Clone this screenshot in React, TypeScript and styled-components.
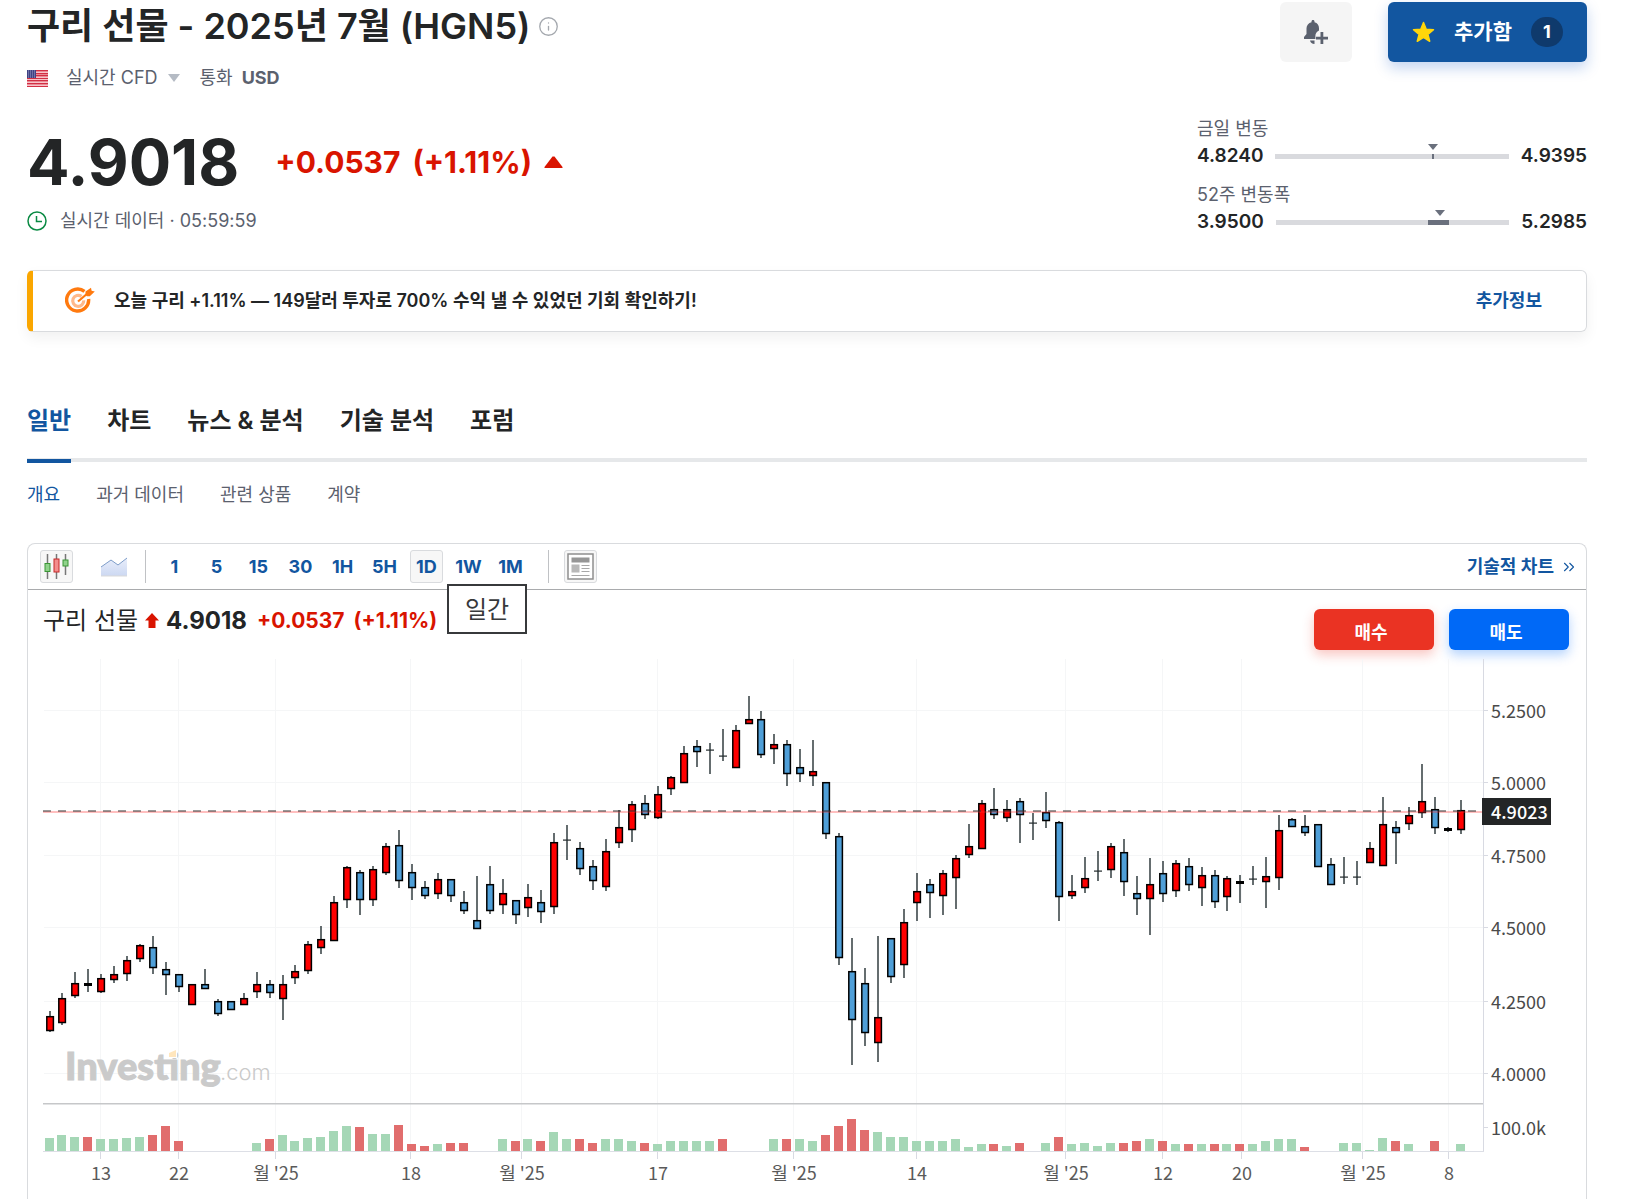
import React from "react";
import styled, { createGlobalStyle } from "styled-components";
import { ChevronsRight, Info } from "lucide-react";

const sans = `Inter, "Noto Sans CJK KR", sans-serif`;
const korean = `"Noto Sans CJK KR", sans-serif`;
const color = {
  ink: "#232526",
  muted: "#5b616e",
  blue: "#1256a0",
  red: "#d91400",
  line: "#d9dbde",
};

const GlobalStyle = createGlobalStyle`
  *, *::before, *::after { box-sizing: border-box; }
  body { margin: 0; background: #fff; color: ${color.ink}; font-family: ${sans}; }
  h1, p, dl, dd, dt { margin: 0; }
  button { font: inherit; color: inherit; border: 0; padding: 0; background: none; cursor: pointer; }
  a { text-decoration: none; color: inherit; }
`;

const Page = styled.main`
  padding: 0 43px 0 27px;
`;

/* ---------- header ---------- */

const Header = styled.header`
  display: flex;
  justify-content: space-between;
`;

const Summary = styled.div`
  padding-top: 4px;
`;

const TitleRow = styled.div`
  display: flex;
  align-items: center;
  gap: 8px;
  height: 44px;
  color: #a4a8ae;
`;

const Title = styled.h1`
  font-size: 36px;
  line-height: 44px;
  font-weight: 600;
  color: ${color.ink};
`;

const MetaRow = styled.div<{ $top: number }>`
  display: flex;
  align-items: center;
  margin-top: ${(p) => p.$top}px;
  height: 24px;
  font-size: 18px;
  line-height: 24px;
  color: ${color.muted};
`;

const Market = styled.button`
  display: flex;
  align-items: center;
  gap: 10px;
  margin: 0 20px 0 18px;
`;

const Currency = styled.strong`
  margin-left: 9px;
  font-weight: 700;
`;

const PriceRow = styled.div`
  display: flex;
  align-items: center;
  margin-top: 40px;
  height: 64px;
`;

const Price = styled.div`
  font-size: 63px;
  line-height: 64px;
  font-weight: 700;
`;

const Change = styled.div`
  display: flex;
  align-items: center;
  gap: 12px;
  margin-left: 36px;
  font-size: 30px;
  line-height: 36px;
  font-weight: 700;
  color: ${color.red};
`;

const Status = styled.span`
  margin-left: 13px;
`;

const Side = styled.div`
  width: 390px;
  padding-top: 2px;
`;

const Actions = styled.div`
  display: flex;
  justify-content: flex-end;
  gap: 36px;
  height: 60px;
`;

const AlertButton = styled.button`
  display: grid;
  place-items: center;
  width: 72px;
  border-radius: 6px;
  background: #f5f5f5;
`;

const WatchButton = styled.button`
  display: flex;
  align-items: center;
  justify-content: center;
  gap: 19px;
  width: 199px;
  border-radius: 6px;
  background: ${color.blue};
  box-shadow: 0 6px 14px rgba(18, 86, 200, 0.25);
  color: #fff;
  font-size: 21px;
  font-weight: 700;
`;

const WatchLabel = styled.span`
  padding-bottom: 5px;
`;

const Count = styled.span`
  width: 32px;
  height: 30px;
  border-radius: 15px;
  background: #0f3a6c;
  font-size: 18px;
  line-height: 30px;
  text-align: center;
`;

const Ranges = styled.dl`
  display: flex;
  flex-direction: column;
  gap: 15px;
  margin-top: 55px;
  font-size: 18px;
  line-height: 24px;
`;

const RangeLabel = styled.dt`
  color: ${color.muted};
`;

const RangeRow = styled.dd`
  display: flex;
  align-items: center;
  justify-content: space-between;
  gap: 12px;
  margin-top: 3px;
  font-size: 19px;
  font-weight: 600;
`;

const Track = styled.div`
  position: relative;
  flex: 1;
  height: 5px;
  background: #d9dade;
`;

const Span = styled.span`
  position: absolute;
  top: 0;
  height: 5px;
  background: #6a707d;
`;

const Pointer = styled.span`
  position: absolute;
  top: -10px;
  margin-left: -4px;
  border: 5px solid transparent;
  border-top: 6px solid #6a707d;
  border-bottom: 0;
`;

/* ---------- promo ---------- */

const Promo = styled.section`
  display: flex;
  align-items: center;
  gap: 19px;
  margin-top: 36px;
  height: 62px;
  padding: 0 44px 0 32px;
  border: 1px solid ${color.line};
  border-left: 6px solid #faa600;
  border-radius: 6px;
  box-shadow: 0 6px 14px rgba(0, 0, 0, 0.06);
  font-size: 18px;
  line-height: 24px;
  font-weight: 600;
`;

const PromoLink = styled.a`
  margin-left: auto;
  color: ${color.blue};
`;

/* ---------- navigation ---------- */

const Tabs = styled.nav`
  display: flex;
  gap: 36px;
  margin-top: 70px;
  height: 60px;
  border-bottom: 4px solid #e6e8ea;
  font-size: 24px;
  line-height: 38px;
  font-weight: 600;
`;

const Tab = styled.a<{ $active?: boolean }>`
  height: 61px;
  color: ${(p) => (p.$active ? color.blue : color.ink)};
  border-bottom: 4px solid ${(p) => (p.$active ? color.blue : "transparent")};
`;

const SubTabs = styled.nav`
  display: flex;
  gap: 36px;
  margin-top: 21px;
  font-size: 18px;
  line-height: 24px;
  color: ${color.muted};
`;

const SubTab = styled.a<{ $active?: boolean }>`
  color: ${(p) => (p.$active ? color.blue : "inherit")};
`;

/* ---------- chart card ---------- */

const Card = styled.section`
  margin-top: 36px;
  border: 1px solid ${color.line};
  border-bottom: 0;
  border-radius: 8px 8px 0 0;
`;

const Toolbar = styled.div`
  display: flex;
  align-items: center;
  height: 46px;
  padding: 0 8px 0 12px;
  border-bottom: 1px solid #a9abad;
`;

const Tool = styled.button<{ $boxed?: boolean }>`
  display: grid;
  place-items: center;
  width: 33px;
  height: 33px;
  border: 1px solid ${(p) => (p.$boxed ? "#d9dbde" : "transparent")};
  border-radius: 3px;
  background: ${(p) => (p.$boxed ? "#f7f7f7" : "transparent")};
`;

const ToolGroup = styled.div`
  display: flex;
  gap: 24px;
`;

const Divider = styled.span`
  width: 1px;
  height: 33px;
  margin: 0 15px;
  background: #c0c2c5;
`;

const Frames = styled.div`
  display: flex;
  gap: 9px;
  margin-right: 6px;
  margin-left: -3px;
  font-size: 18px;
  font-weight: 700;
  color: ${color.blue};
`;

const FrameSlot = styled.div`
  position: relative;
`;

const Tooltip = styled.div`
  position: absolute;
  top: 34px;
  left: 37px;
  z-index: 1;
  width: 80px;
  height: 50px;
  border: 2px solid #37393b;
  background: #fff;
  color: #37393b;
  font-size: 24px;
  line-height: 48px;
  font-weight: 400;
  text-align: center;
`;

const TechLink = styled.a`
  display: flex;
  align-items: center;
  gap: 6px;
  margin-left: auto;
  color: ${color.blue};
  font-size: 18px;
  line-height: 24px;
  font-weight: 600;
`;

const Quote = styled.div`
  display: flex;
  align-items: center;
  height: 69px;
  padding: 0 17px 8px 15px;
  font-size: 24px;
  line-height: 36px;
`;

const QuotePrice = styled.strong`
  margin: 0 10px 0 7px;
  font-weight: 700;
`;

const QuoteChange = styled.span`
  display: flex;
  gap: 9px;
  color: ${color.red};
  font-size: 21px;
  font-weight: 700;
`;

const QuoteName = styled.span`
  margin-right: 7px;
`;

const Trade = styled.div`
  display: flex;
  gap: 15px;
  height: 41px;
  margin: 17px 0 0 auto;
`;

const TradeButton = styled.button<{ $tone: string; $glow: string }>`
  width: 120px;
  height: 41px;
  padding: 6px 6px 0 0;
  border-radius: 6px;
  background: ${(p) => p.$tone};
  box-shadow: 0 5px 12px ${(p) => p.$glow};
  color: #fff;
  font-size: 18px;
  font-weight: 700;
`;

const ChartSvg = styled.svg`
  display: block;
  width: 100%;
  height: auto;
  font-family: ${korean};
  font-size: 18px;
`;

/* ---------- chart data ---------- */

type Candle = [number, number, number, number, string];

/* high, body top, body bottom, low, kind: R up, B down, K thin body, D doji */
const candles: Candle[] = [
  [352, 357, 372, 373, "R"], [334, 339, 364, 366, "R"], [313, 324, 337, 339, "R"], [310, 324, 327, 333, "K"],
  [315, 319, 333, 334, "R"], [307, 315, 321, 324, "R"], [297, 301, 315, 322, "R"], [285, 286, 300, 303, "R"],
  [277, 288, 309, 315, "B"], [303, 310, 316, 336, "B"], [315, 315, 328, 333, "B"], [325, 325, 346, 346, "R"],
  [310, 325, 330, 330, "B"], [340, 342, 355, 357, "B"], [342, 342, 351, 351, "B"], [334, 339, 346, 346, "R"],
  [313, 325, 333, 339, "R"], [321, 325, 334, 339, "B"], [316, 325, 340, 361, "R"], [306, 312, 319, 325, "R"],
  [282, 285, 312, 315, "R"], [267, 280, 289, 295, "R"], [237, 243, 282, 282, "R"], [207, 208, 241, 249, "R"],
  [211, 213, 241, 256, "B"], [207, 210, 241, 247, "R"], [184, 187, 214, 216, "R"], [171, 186, 222, 229, "B"],
  [205, 213, 229, 241, "B"], [222, 228, 237, 240, "B"], [214, 220, 235, 240, "R"], [220, 220, 237, 243, "B"],
  [232, 243, 252, 255, "B"], [217, 261, 270, 270, "B"], [207, 225, 252, 255, "B"], [220, 234, 246, 255, "R"],
  [241, 241, 256, 265, "B"], [225, 238, 249, 258, "R"], [231, 243, 253, 264, "B"], [174, 183, 248, 255, "R"],
  [166, 181, 181, 201, "D"], [183, 189, 210, 216, "B"], [201, 207, 222, 231, "B"], [180, 192, 228, 232, "R"],
  [151, 168, 184, 189, "R"], [142, 145, 171, 183, "R"], [136, 144, 156, 160, "B"], [127, 135, 159, 160, "R"],
  [117, 118, 130, 136, "R"], [87, 94, 124, 124, "R"], [81, 87, 93, 108, "B"], [84, 91, 91, 115, "D"],
  [70, 97, 97, 102, "D"], [66, 71, 109, 109, "R"], [37, 60, 65, 65, "R"], [52, 60, 96, 99, "B"],
  [75, 85, 90, 105, "R"], [81, 85, 115, 127, "B"], [90, 108, 115, 123, "B"], [81, 112, 117, 127, "R"],
  [123, 123, 175, 180, "B"], [174, 177, 299, 306, "B"], [279, 312, 361, 406, "B"], [309, 324, 374, 387, "B"],
  [277, 358, 384, 403, "R"], [279, 279, 318, 324, "B"], [250, 263, 306, 319, "R"], [214, 232, 244, 262, "R"],
  [220, 225, 234, 259, "B"], [211, 214, 237, 256, "R"], [196, 199, 219, 250, "R"], [165, 187, 196, 199, "R"],
  [141, 144, 190, 190, "R"], [129, 150, 156, 160, "B"], [141, 150, 159, 163, "R"], [139, 142, 156, 184, "B"],
  [154, 164, 164, 181, "D"], [133, 153, 162, 169, "B"], [162, 163, 238, 262, "B"], [216, 232, 237, 240, "R"],
  [198, 219, 229, 234, "R"], [192, 212, 212, 222, "D"], [184, 187, 211, 219, "R"], [180, 193, 223, 237, "B"],
  [217, 234, 240, 256, "B"], [199, 225, 240, 276, "R"], [202, 214, 235, 243, "B"], [201, 204, 232, 238, "R"],
  [199, 207, 226, 232, "B"], [208, 216, 229, 247, "R"], [211, 216, 243, 249, "B"], [217, 219, 238, 252, "R"],
  [216, 222, 225, 244, "K"], [207, 220, 220, 226, "D"], [198, 217, 223, 249, "R"], [156, 171, 219, 231, "R"],
  [159, 160, 168, 168, "B"], [156, 167, 174, 177, "B"], [165, 165, 208, 208, "B"], [199, 205, 226, 226, "B"],
  [198, 218, 218, 225, "D"], [202, 218, 218, 226, "D"], [183, 189, 204, 204, "R"], [138, 165, 207, 207, "R"],
  [162, 168, 174, 205, "B"], [148, 156, 165, 171, "R"], [105, 142, 154, 159, "R"], [138, 150, 169, 175, "B"],
  [168, 169, 172, 173, "K"], [141, 151, 171, 175, "R"],
];

/* one entry per session: bar height, negative for a falling day, 0 for none */
const volumes = [
  13, 16, 14, -14, 12, 12, 13, 14, -16, -25, -10, 0, 0, 0, 0, 0, 8, -12, 16, 10, 13, 14, 20, 25, -24, 17, 17, -26, -7, -5,
  7, -8, -8, 0, 0, 12, -10, 12, -10, 19, 12, -12, -8, 12, 12, 10, -8, 7, 10, 10, 10, 10, -12, 0, 0, 0, 12, -12, 12, 10,
  -16, -25, -32, -21, 19, 14, 14, 10, 10, 10, 12, 4, 7, -7, 5, -8, 0, 8, -14, 7, 8, 5, 8, -8, -10, 12, -10, 7, -7, 7,
  -7, 7, -7, 7, 10, 12, 12, -4, 0, 0, 8, 8, 1, 13, -10, 7, 0, -10, 0, 7,
];

const prices: [string, number][] = [
  ["5.2500", 52], ["5.0000", 124], ["4.7500", 197], ["4.5000", 269], ["4.2500", 343], ["4.0000", 415],
];

const dates: [string, number][] = [
  ["13", 73], ["22", 151], ["월 '25", 248], ["18", 383], ["월 '25", 494], ["17", 630], ["월 '25", 766],
  ["14", 889], ["월 '25", 1038], ["12", 1135], ["20", 1214], ["월 '25", 1335], ["8", 1421],
];

const timeframes = ["1", "5", "15", "30", "1H", "5H", "1D", "1W", "1M"];

const AXIS = 1455;
const BASE = 492;
const sessionX = (i: number) => Math.round(21.5 + i * 12.945);

function CandleMark({ x, candle }: { x: number; candle: Candle }) {
  const [high, top, bottom, low, kind] = candle;
  const wick = <rect x={x - 1} y={high} width={2} height={low - high} fill="#3f494b" opacity={0.8} />;
  if (kind === "D") {
    return <g>{wick}<rect x={x - 4} y={top - 0.5} width={8} height={1.2} fill="#232b2d" /></g>;
  }
  if (kind === "K") {
    return <g>{wick}<rect x={x - 4} y={top} width={8} height={bottom - top} fill="#000" /></g>;
  }
  return (
    <g>
      {wick}
      <rect x={x - 3.2} y={top + 0.7} width={6.6} height={bottom - top - 1.2} fill={kind === "R" ? "#ff0000" : "#4f9fd8"} stroke="#000" strokeWidth={1.5} />
    </g>
  );
}

function Chart() {
  return (
    <ChartSvg viewBox="0 0 1558 540" role="img" aria-label="구리 선물">
      {prices.map(([label, y]) => (
        <g key={label}>
          <rect x={16} y={y - 1} width={AXIS - 16} height={1} fill="#f5f6f7" />
          <rect x={AXIS} y={y - 1} width={5} height={1} fill="#d8dae2" />
          <text x={1463} y={y + 7} fill="#4a4a4a">{label}</text>
        </g>
      ))}
      {dates.map(([label, x]) => (
        <g key={x}>
          <rect x={x - 1} y={0} width={1} height={BASE} fill="#f5f6f7" />
          <rect x={x - 1} y={BASE} width={1} height={8} fill="#d8dae2" />
          <text x={x} y={521} textAnchor="middle" fill="#5a5a5a">{label}</text>
        </g>
      ))}

      <g fill="#cacaca">
        <text x={37} y={421} fontFamily="Lato, sans-serif" fontSize={38} fontWeight={900} stroke="#cacaca" strokeWidth={1}>Investing</text>
        <text x={192} y={421} fontFamily="Inter, sans-serif" fontSize={22} fontWeight={300}>.com</text>
        <rect x={139} y={390} width={10} height={9} fill="#fff" />
        <path d="m141 394 7-3v7h-7Z" fill="#ffe6bd" />
      </g>

      {candles.map((candle, i) => <CandleMark key={i} x={sessionX(i)} candle={candle} />)}

      <rect x={15} y={152} width={AXIS - 15} height={2} fill="#ff2a2a" opacity={0.3} />
      <line x1={15} x2={AXIS} y1={152} y2={152} stroke="#333" strokeWidth={1.2} strokeDasharray="8 7" />

      {volumes.map((v, i) =>
        v === 0 ? null : (
          <rect key={i} x={sessionX(i) - 5} y={BASE - Math.abs(v)} width={9} height={Math.abs(v)} fill={v > 0 ? "#a5d7b6" : "#e16d6d"} />
        )
      )}

      <rect x={15} y={444} width={AXIS - 15} height={1.5} fill="#c6c7c9" />
      <rect x={15} y={BASE} width={AXIS - 14} height={1} fill="#dddfe6" />
      <rect x={AXIS} y={0} width={1} height={BASE} fill="#d8dae2" />
      <rect x={AXIS} y={468} width={5} height={1} fill="#d8dae2" />
      <text x={1463} y={476} fill="#4a4a4a">100.0k</text>
      <rect x={1454} y={139} width={69} height={27} fill="#232526" />
      <text x={1463} y={160} fill="#fff" fontWeight={500}>4.9023</text>
    </ChartSvg>
  );
}

/* ---------- icons ---------- */

function Flag() {
  return (
    <svg width="21" height="17" viewBox="0 0 21 17" aria-label="US">
      <rect width="21" height="17" fill="#f7c3c9" />
      {[0, 3, 5, 8, 10, 13, 16].map((y) => <rect key={y} y={y} width="21" height="1" fill="#d22f44" />)}
      {[1, 4, 6, 11, 14].map((y) => <rect key={y} y={y} width="21" height="1" fill="#e98a95" />)}
      <rect width="9" height="8" fill="#3f4283" />
      {[1, 3, 5, 7].map((y) => <path key={y} d={`M1 ${y}h7`} stroke="#b9bbdc" strokeWidth="0.8" strokeDasharray="1 1" />)}
    </svg>
  );
}

function AlertBell() {
  return (
    <svg width="26" height="26" viewBox="0 0 26 26" fill="#5b616e" aria-hidden="true">
      <path d="M10 1c1 0 1.500.6 1.500 1.500v.8c3 .8 4.500 3 4.500 6v2.200c-2.300 1-3.600 3.200-3.600 5.400V20H1v-2l2.500-3V9.300c0-3 2-5.200 5-6v-.8C8.500 1.600 9 1 10 1Z" />
      <path d="M7 21.500h4.500v3.600C9 25 7.500 23.500 7 21.500Z" />
      <path d="M17.500 13h2.800v4.700H25v2.800h-4.700V25h-2.800v-4.500H13v-2.800h4.500Z" />
    </svg>
  );
}

function Star() {
  return (
    <svg width="23" height="22" viewBox="0 0 23 22" fill="#ffd60a" stroke="#ffd60a" strokeWidth="1.500" strokeLinejoin="round" aria-hidden="true">
      <path d="m11.500 1.500 2.700 6.700 7.300.5-5.600 4.600 1.800 7-6.200-3.900-6.200 3.900 1.800-7-5.600-4.600 7.300-.5Z" />
    </svg>
  );
}

function Clock() {
  return (
    <svg width="20" height="20" viewBox="0 0 20 20" fill="none" stroke="#0a8a43" strokeWidth="1.500" aria-hidden="true">
      <circle cx="10" cy="10" r="9" />
      <path d="M9.500 5v5.500H15" />
    </svg>
  );
}

function Target() {
  return (
    <svg width="30" height="28" viewBox="0 0 30 28" fill="none" aria-hidden="true">
      <path d="M19.500 4.400A11 11 0 1 0 23.600 12" stroke="#ff7a0f" strokeWidth="3.400" />
      <path d="M16.500 9.400a5.500 5.500 0 1 0 2.200 4" stroke="#ffb98a" strokeWidth="3.200" />
      <path d="M13 14.500 23 6" stroke="#ff7a0f" strokeWidth="2.200" />
      <path d="M20.500 7.500V4.600L26 .8l.6 3 3.200.8-5 4.700h-3Z" fill="#ff7a0f" />
    </svg>
  );
}

function CandlesIcon() {
  return (
    <svg width="26" height="27" viewBox="0 0 26 27" aria-hidden="true">
      <path d="M3.500 1v25M12.500 1v25M21.500 1v21" stroke="#777" strokeWidth="1.500" />
      <rect x="1" y="10.500" width="5" height="8" fill="#8fd28a" stroke="#3b9636" />
      <rect x="10" y="6" width="5" height="13" fill="#f38d8d" stroke="#c62828" />
      <rect x="19" y="7" width="5" height="6" fill="#8fd28a" stroke="#3b9636" />
    </svg>
  );
}

function AreaIcon() {
  return (
    <svg width="26" height="20" viewBox="0 0 26 20" aria-hidden="true">
      <defs>
        <linearGradient id="area" x1="0" y1="0" x2="0" y2="1">
          <stop offset="0" stopColor="#e9eefb" />
          <stop offset="1" stopColor="#ccd8f2" />
        </linearGradient>
      </defs>
      <path d="M0 10 10 3l7 5 9-7v18H0Z" fill="url(#area)" />
      <path d="M0 10 10 3l7 5 9-7" fill="none" stroke="#7d9cc8" />
      <path d="M0 19h26" stroke="#d9d9d9" />
    </svg>
  );
}

function NewsIcon() {
  return (
    <svg width="27" height="27" viewBox="0 0 27 27" aria-hidden="true">
      <rect x="1" y="1" width="25" height="25" fill="#fff" stroke="#8f8f8f" strokeWidth="1.500" />
      <rect x="4.500" y="4.500" width="18" height="5" fill="#969696" />
      <rect x="4.500" y="11.500" width="8" height="8" fill="#b8b8b8" />
      <path d="M14.500 12.500h8M14.500 15.500h8M14.500 18.500h8M4.500 22.500h18" stroke="#a8a8a8" strokeWidth="1.200" />
    </svg>
  );
}

/* ---------- page ---------- */

type RangeProps = { label: string; low: string; high: string; start: number; width: number; at: number };

function Range({ label, low, high, start, width, at }: RangeProps) {
  return (
    <div>
      <RangeLabel>{label}</RangeLabel>
      <RangeRow>
        <span>{low}</span>
        <Track>
          <Span style={{ left: `${start}%`, width: `${width}%` }} />
          <Pointer style={{ left: `${at}%` }} />
        </Track>
        <span>{high}</span>
      </RangeRow>
    </div>
  );
}

export default function App() {
  return (
    <>
      <GlobalStyle />
      <Page>
        <Header>
          <Summary>
            <TitleRow>
              <Title>구리 선물 - 2025년 7월 (HGN5)</Title>
              <Info size={21} strokeWidth={1.5} />
            </TitleRow>
            <MetaRow $top={18}>
              <Flag />
              <Market type="button">
                실시간 CFD
                <svg width="12" height="8" viewBox="0 0 12 8" fill="#b5bbc4" aria-hidden="true"><path d="M0 0h12L6 8Z" /></svg>
              </Market>
              통화
              <Currency>USD</Currency>
            </MetaRow>
            <PriceRow>
              <Price>4.9018</Price>
              <Change>
                <span>+0.0537</span>
                <span>(+1.11%)</span>
                <svg width="19" height="12" viewBox="0 0 19 12" fill={color.red} aria-hidden="true"><path d="M8.500.5h2L18.500 11v1H.5v-1Z" /></svg>
              </Change>
            </PriceRow>
            <MetaRow $top={15}>
              <Clock />
              <Status>실시간 데이터 · 05:59:59</Status>
            </MetaRow>
          </Summary>
          <Side>
            <Actions>
              <AlertButton type="button" aria-label="알림"><AlertBell /></AlertButton>
              <WatchButton type="button">
                <Star />
                <WatchLabel>추가함</WatchLabel>
                <Count>1</Count>
              </WatchButton>
            </Actions>
            <Ranges>
              <Range label="금일 변동" low="4.8240" high="4.9395" start={67} width={1} at={67} />
              <Range label="52주 변동폭" low="3.9500" high="5.2985" start={65} width={9} at={70} />
            </Ranges>
          </Side>
        </Header>

        <Promo>
          <Target />
          <p>오늘 구리 +1.11% — 149달러 투자로 700% 수익 낼 수 있었던 기회 확인하기!</p>
          <PromoLink href="#more">추가정보</PromoLink>
        </Promo>

        <Tabs>
          <Tab href="#general" $active>일반</Tab>
          <Tab href="#chart">차트</Tab>
          <Tab href="#news">뉴스 &amp; 분석</Tab>
          <Tab href="#technical">기술 분석</Tab>
          <Tab href="#forum">포럼</Tab>
        </Tabs>
        <SubTabs>
          <SubTab href="#overview" $active>개요</SubTab>
          <SubTab href="#history">과거 데이터</SubTab>
          <SubTab href="#related">관련 상품</SubTab>
          <SubTab href="#contracts">계약</SubTab>
        </SubTabs>

        <Card>
          <Toolbar>
            <ToolGroup>
              <Tool type="button" $boxed aria-label="캔들"><CandlesIcon /></Tool>
              <Tool type="button" aria-label="영역"><AreaIcon /></Tool>
            </ToolGroup>
            <Divider />
            <Frames>
              {timeframes.map((label) => (
                <FrameSlot key={label}>
                  <Tool type="button" $boxed={label === "1D"}>{label}</Tool>
                  {label === "1D" && <Tooltip role="tooltip">일간</Tooltip>}
                </FrameSlot>
              ))}
            </Frames>
            <Divider />
            <Tool type="button" $boxed aria-label="뉴스"><NewsIcon /></Tool>
            <TechLink href="#technical-chart">
              기술적 차트
              <ChevronsRight size={18} strokeWidth={1.5} />
            </TechLink>
          </Toolbar>
          <Quote>
            <QuoteName>구리 선물</QuoteName>
            <svg width="14" height="15" viewBox="0 0 14 15" fill={color.red} aria-hidden="true"><path d="m7 0 7 7.500h-3.500V15h-7V7.500H0Z" /></svg>
            <QuotePrice>4.9018</QuotePrice>
            <QuoteChange>
              <span>+0.0537</span>
              <span>(+1.11%)</span>
            </QuoteChange>
            <Trade>
              <TradeButton type="button" $tone="#ea3323" $glow="rgba(234, 51, 35, 0.28)">매수</TradeButton>
              <TradeButton type="button" $tone="#0069f7" $glow="rgba(0, 105, 247, 0.3)">매도</TradeButton>
            </Trade>
          </Quote>
          <Chart />
        </Card>
      </Page>
    </>
  );
}
